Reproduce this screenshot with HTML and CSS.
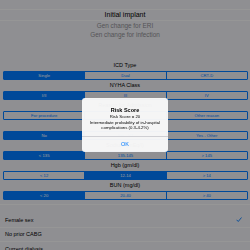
FILE: index.html
```html
<!DOCTYPE html>
<html lang="en">
  <head>
    <meta charset="UTF-8" />
    <meta name="viewport" content="width=device-width, initial-scale=1.0" />
    <title>ICD Risk Score</title>
    <link rel="stylesheet" href="styles.css">
  </head>
  <body>
    <div class="page">
      <div class="picker">
        <div class="pick-item selected">Initial implant</div>
        <div class="pick-item">Gen change for ERI</div>
        <div class="pick-item">Gen change for infection</div>
      </div>

      <div class="form">
        <div class="field">
          <div class="label">ICD Type</div>
          <div class="segments">
            <span class="seg on">Single</span>
            <span class="seg">Dual</span>
            <span class="seg">CRT-D</span>
          </div>
        </div>
        <div class="field">
          <div class="label">NYHA Class</div>
          <div class="segments">
            <span class="seg on">I/II</span>
            <span class="seg">III</span>
            <span class="seg">IV</span>
          </div>
        </div>
        <div class="field">
          <div class="label">Reason for Admission</div>
          <div class="segments">
            <span class="seg">For procedure</span>
            <span class="seg">HF</span>
            <span class="seg">Other reason</span>
          </div>
        </div>
        <div class="field">
          <div class="label">Cardiac Arrest</div>
          <div class="segments">
            <span class="seg on">No</span>
            <span class="seg">Yes - VT</span>
            <span class="seg">Yes - Other</span>
          </div>
        </div>
        <div class="field">
          <div class="label">Sodium (mEq/l)</div>
          <div class="segments">
            <span class="seg on">&lt; 135</span>
            <span class="seg">135-145</span>
            <span class="seg">&gt; 145</span>
          </div>
        </div>
        <div class="field">
          <div class="label">Hgb (gm/dl)</div>
          <div class="segments">
            <span class="seg">&lt; 12</span>
            <span class="seg on">12-14</span>
            <span class="seg">&gt; 14</span>
          </div>
        </div>
        <div class="field">
          <div class="label">BUN (mg/dl)</div>
          <div class="segments">
            <span class="seg on">&lt; 20</span>
            <span class="seg">20-40</span>
            <span class="seg">&gt; 40</span>
          </div>
        </div>
      </div>

      <ul class="table">
        <li class="row">
          <span>Female sex</span>
          <svg class="check" width="6" height="5" viewBox="0 0 12 10">
            <polyline points="1,5.5 4.5,9 11,1" fill="none" stroke="#007aff" stroke-width="1.8" />
          </svg>
        </li>
        <li class="row"><span>No prior CABG</span></li>
        <li class="row"><span>Current dialysis</span></li>
      </ul>
    </div>

    <div class="dim">
      <div class="alert">
        <div class="alert-body">
          <div class="alert-title">Risk Score</div>
          <div class="alert-text">Risk Score = 20<br>Intermediate probability of in-hospital complications (0.3-4.2%)</div>
        </div>
        <div class="alert-button">OK</div>
      </div>
    </div>
  </body>
</html>
```

FILE: styles.css
```css
html,
body {
  margin: 0;
  padding: 0;
}

body {
  width: 250px;
  height: 250px;
  overflow: hidden;
  background: #efeff4;
  font-family: "Liberation Sans", Arial, sans-serif;
  color: #000;
}

.picker {
  height: 60px;
  box-sizing: border-box;
  padding-top: 9px;
  text-align: center;
}

.pick-item {
  height: 9px;
  line-height: 9px;
  font-size: 6.4px;
  color: #8e8e93;
}

.pick-item.selected {
  height: 12px;
  line-height: 10px;
  font-size: 7px;
  color: #000;
  border-top: 1px solid #fbfbfb;
  border-bottom: 1px solid #fbfbfb;
  box-sizing: border-box;
}

.field {
  height: 20px;
}

.label {
  height: 11px;
  line-height: 11px;
  font-size: 5.5px;
  text-align: center;
}

.segments {
  display: flex;
  height: 9px;
  margin: 0 2px 0 3px;
  border: 1px solid #007aff;
  border-radius: 1px;
  box-sizing: border-box;
}

.seg {
  flex: 1;
  line-height: 7px;
  font-size: 4.2px;
  text-align: center;
  color: #007aff;
  white-space: nowrap;
}

.seg + .seg {
  border-left: 1px solid #007aff;
}

.seg.on {
  background: #007aff;
  color: #fff;
}

.table {
  list-style: none;
  margin: 4px 0 0;
  padding: 8px 0 0;
  border-top: 1px solid #fbfbfb;
}

.row {
  display: flex;
  align-items: center;
  justify-content: space-between;
  height: 14.5px;
  padding: 0 8px 0 5px;
  box-sizing: border-box;
  border-bottom: 1px solid #fbfbfb;
  font-size: 5.5px;
}

.check {
  display: block;
}

/* alert over dimmed page */
.dim {
  position: fixed;
  left: 0;
  top: 0;
  width: 250px;
  height: 250px;
  background: rgba(0, 0, 0, 0.4);
  display: flex;
  align-items: center;
  justify-content: center;
}

.alert {
  width: 86px;
  border-radius: 3px;
  background: rgba(248, 248, 248, 0.97);
  text-align: center;
}

.alert-body {
  height: 39px;
  box-sizing: border-box;
  padding: 8.5px 4px 0;
  border-bottom: 1px solid #cfcfd3;
}

.alert-title {
  line-height: 7px;
  font-size: 5.5px;
  font-weight: bold;
}

.alert-text {
  margin-top: 0.5px;
  line-height: 5.5px;
  font-size: 4.3px;
}

.alert-button {
  height: 15px;
  line-height: 15px;
  font-size: 5.5px;
  color: #007aff;
}
```
